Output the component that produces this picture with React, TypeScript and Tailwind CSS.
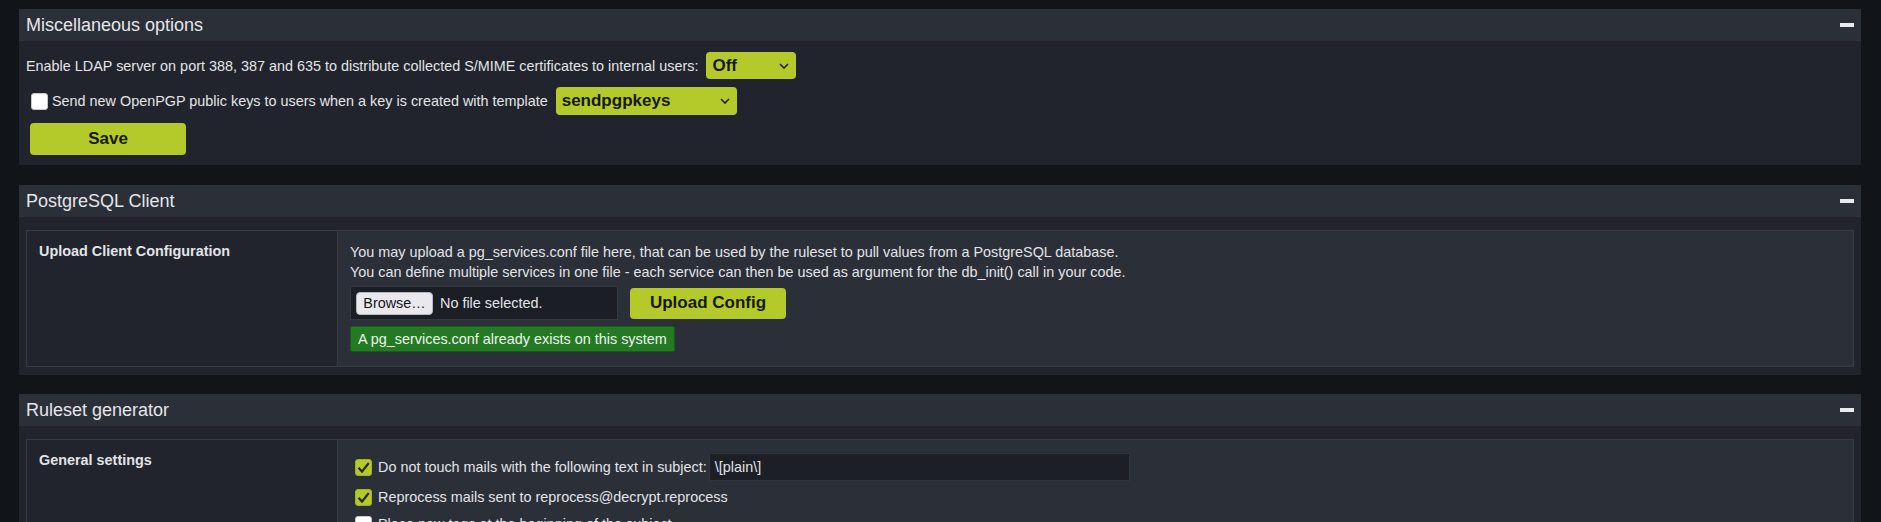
import React from 'react';

function Chevron() {
  return (
    <svg width="10" height="6" viewBox="0 0 10 6" className="shrink-0">
      <path d="M1 1 L5 5 L9 1" fill="none" stroke="#1c1f0a" strokeWidth="1.6" />
    </svg>
  );
}

function FakeSelect({ value, width, height }: { value: string; width: string; height: string }) {
  return (
    <div
      className={`inline-flex items-center justify-between rounded-[4px] bg-[#b4ca2b] pl-[6px] pr-[7px] text-[17px] font-bold text-[#16180a] ${width} ${height}`}
    >
      <span>{value}</span>
      <Chevron />
    </div>
  );
}

function Checkbox({ checked }: { checked?: boolean }) {
  if (checked) {
    return (
      <div className="flex h-[17px] w-[17px] shrink-0 items-center justify-center rounded-[3px] border border-[#9fb324] bg-[#b4ca2b]">
        <svg width="15" height="15" viewBox="0 0 15 15">
          <path d="M2.5 7.8 L6 11.6 L12.8 3" fill="none" stroke="#23270b" strokeWidth="2.2" />
        </svg>
      </div>
    );
  }
  return <div className="h-[17px] w-[17px] shrink-0 rounded-[3px] border border-[#c9c9c9] bg-white" />;
}

function PanelHeader({ title }: { title: string }) {
  return (
    <div className="flex h-[32px] items-center justify-between bg-[#2b2f38] px-[7px]">
      <span className="text-[18px] text-[#e4e6ea]">{title}</span>
      <div className="h-[4px] w-[14px] bg-[#e9eaec]" />
    </div>
  );
}

export default function App() {
  return (
    <div className="h-screen overflow-hidden bg-[#111418] pt-[9px] pl-[19px] pr-[20px] font-['Liberation_Sans',Arial,sans-serif] text-[14.4px] leading-[20px] text-[#e2e4e8]">
      {/* Miscellaneous options */}
      <div className="bg-[#21242c]">
        <PanelHeader title="Miscellaneous options" />
        <div className="flex flex-col items-start gap-[8px] px-[7px] pt-[11px] pb-[10px]">
          <div className="flex items-baseline gap-[8px]">
            <span>Enable LDAP server on port 388, 387 and 635 to distribute collected S/MIME certificates to internal users:</span>
            <FakeSelect value="Off" width="w-[90px]" height="h-[27px]" />
          </div>
          <div className="flex items-baseline">
            <div className="ml-[5px] mr-[4px] self-center">
              <Checkbox />
            </div>
            <span>Send new OpenPGP public keys to users when a key is created with template</span>
            <div className="ml-[8px]">
              <FakeSelect value="sendpgpkeys" width="w-[181px]" height="h-[28px]" />
            </div>
          </div>
          <button className="ml-[4px] h-[32px] w-[156px] rounded-[4px] bg-[#b4ca2b] text-[17px] font-bold text-[#16180a]">
            Save
          </button>
        </div>
      </div>

      {/* PostgreSQL Client */}
      <div className="mt-[20px] bg-[#21242c]">
        <PanelHeader title="PostgreSQL Client" />
        <div className="px-[7px] pt-[13px] pb-[8px]">
          <div className="flex border border-[#373b45]">
            <div className="w-[311px] shrink-0 border-r border-[#373b45] pl-[12px] pt-[10px] font-bold">
              Upload Client Configuration
            </div>
            <div className="flex-1 bg-[#2b2f38] pl-[12px] pt-[11px] pb-[14px]">
              <div>You may upload a pg_services.conf file here, that can be used by the ruleset to pull values from a PostgreSQL database.</div>
              <div>You can define multiple services in one file - each service can then be used as argument for the db_init() call in your code.</div>
              <div className="mt-[4px] flex items-center gap-[12px]">
                <div className="flex h-[34px] w-[268px] items-center gap-[7px] border border-[#343842] bg-[#1b1e25] pl-[5px]">
                  <span className="flex h-[23px] w-[77px] items-center justify-center rounded-[4px] border border-[#b8b8c0] bg-[#e9e9ed] text-[#15141a]">
                    Browse…
                  </span>
                  <span>No file selected.</span>
                </div>
                <button className="h-[31px] w-[156px] rounded-[4px] bg-[#b4ca2b] text-[17px] font-bold text-[#16180a]">
                  Upload Config
                </button>
              </div>
              <div className="mt-[6px] flex h-[26px] w-fit items-center rounded-[2px] border border-[#1a5a1a] bg-[#237a22] px-[7px] text-[#f1f3f1]">
                A pg_services.conf already exists on this system
              </div>
            </div>
          </div>
        </div>
      </div>

      {/* Ruleset generator */}
      <div className="mt-[19px] bg-[#21242c]">
        <PanelHeader title="Ruleset generator" />
        <div className="px-[7px] pt-[13px] pb-[8px]">
          <div className="flex border border-[#373b45]">
            <div className="w-[311px] shrink-0 border-r border-[#373b45] pl-[12px] pt-[10px] font-bold">
              General settings
            </div>
            <div className="flex flex-1 flex-col gap-[5px] bg-[#2b2f38] pl-[17px] pt-[13px] pb-[14px]">
              <div className="flex h-[28px] items-center">
                <Checkbox checked />
                <span className="ml-[6px]">Do not touch mails with the following text in subject:</span>
                <div className="ml-[2px] flex h-[28px] w-[421px] items-center border border-[#30343c] bg-[#1c1f26] pl-[5px]">
                  \[plain\]
                </div>
              </div>
              <div className="flex h-[22px] items-center">
                <Checkbox checked />
                <span className="ml-[6px]">Reprocess mails sent to reprocess@decrypt.reprocess</span>
              </div>
              <div className="flex h-[22px] items-center">
                <Checkbox />
                <span className="ml-[6px]">Place new tags at the beginning of the subject</span>
              </div>
              <div className="flex h-[22px] items-center">
                <Checkbox checked />
                <span className="ml-[6px]">Add a header to processed mails</span>
              </div>
            </div>
          </div>
        </div>
      </div>
    </div>
  );
}
